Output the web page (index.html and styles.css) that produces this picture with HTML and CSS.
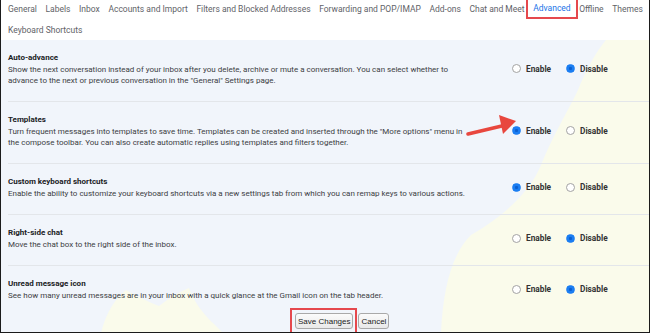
FILE: index.html
```html
<!DOCTYPE html>
<html>
<head>
<meta charset="utf-8">
<link rel="stylesheet" href="styles.css">
</head>
<body>
<div class="frame">
  <header class="tabs">
    <nav class="tabrow">
      <span class="tab">General</span>
      <span class="tab">Labels</span>
      <span class="tab">Inbox</span>
      <span class="tab">Accounts and Import</span>
      <span class="tab">Filters and Blocked Addresses</span>
      <span class="tab">Forwarding and POP/IMAP</span>
      <span class="tab">Add-ons</span>
      <span class="tab">Chat and Meet</span>
      <span class="tab active">Advanced</span>
      <span class="tab">Offline</span>
      <span class="tab">Themes</span>
    </nav>
    <nav class="tabrow second">
      <span class="tab">Keyboard Shortcuts</span>
    </nav>
  </header>
  <main class="content">
    <svg class="bgart" width="650" height="293" viewBox="0 0 650 293" aria-hidden="true">
      <path d="M605 0 L650 0 L650 293 L440 293 C442 250 450 215 470 195 C505 175 530 150 540 125 C552 95 565 75 577 50 C585 30 595 12 605 0 Z" fill="#fafbeb"/>
      <path d="M100 293 C105 272 115 258 125 250 C135 256 148 262 158 266 C168 258 178 252 188 248 C193 262 203 275 213 284 L222 293 Z" fill="#fafbeb"/>
    </svg>
    <section class="row">
      <div class="info">
        <div class="title">Auto-advance</div>
        <div class="desc">Show the next conversation instead of your inbox after you delete, archive or mute a conversation. You can select whether to<br>advance to the next or previous conversation in the "General" Settings page.</div>
      </div>
      <div class="opts">
        <label class="opt"><span class="radio"></span>Enable</label>
        <label class="opt"><span class="radio on"></span>Disable</label>
      </div>
    </section>
    <section class="row">
      <div class="info">
        <div class="title">Templates</div>
        <div class="desc">Turn frequent messages into templates to save time. Templates can be created and inserted through the "More options" menu in<br>the compose toolbar. You can also create automatic replies using templates and filters together.</div>
      </div>
      <div class="opts">
        <label class="opt"><span class="radio on"></span>Enable</label>
        <label class="opt"><span class="radio"></span>Disable</label>
      </div>
      <svg class="arrow" width="56" height="24" viewBox="0 0 56 24" aria-hidden="true">
        <path d="M2 20 L40 11" stroke="#e8473e" stroke-width="3.5" stroke-linecap="round"/>
        <path d="M50 7 L33 1 L37 20 Z" fill="#e8473e"/>
      </svg>
    </section>
    <section class="row">
      <div class="info">
        <div class="title">Custom keyboard shortcuts</div>
        <div class="desc">Enable the ability to customize your keyboard shortcuts via a new settings tab from which you can remap keys to various actions.</div>
      </div>
      <div class="opts">
        <label class="opt"><span class="radio on"></span>Enable</label>
        <label class="opt"><span class="radio"></span>Disable</label>
      </div>
    </section>
    <section class="row">
      <div class="info">
        <div class="title">Right-side chat</div>
        <div class="desc">Move the chat box to the right side of the inbox.</div>
      </div>
      <div class="opts">
        <label class="opt"><span class="radio"></span>Enable</label>
        <label class="opt"><span class="radio on"></span>Disable</label>
      </div>
    </section>
    <section class="row last">
      <div class="info">
        <div class="title">Unread message icon</div>
        <div class="desc">See how many unread messages are in your inbox with a quick glance at the Gmail icon on the tab header.</div>
      </div>
      <div class="opts">
        <label class="opt"><span class="radio"></span>Enable</label>
        <label class="opt"><span class="radio on"></span>Disable</label>
      </div>
    </section>
    <div class="actions">
      <div class="hl"><span class="btn">Save Changes</span></div>
      <span class="btn">Cancel</span>
    </div>
  </main>
</div>
</body>
</html>
```
FILE: styles.css
```css
* { box-sizing: border-box; }
html, body { margin: 0; padding: 0; background: #fff; }
.frame {
  width: 650px;
  height: 333px;
  border-left: 1px solid #1b1b1b;
  border-right: 1px solid #1b1b1b;
  border-bottom: 1px solid #1b1b1b;
  overflow: hidden;
  font-family: Roboto, "Liberation Sans", Arial, sans-serif;
  display: flex;
  flex-direction: column;
}
.tabs {
  background: #fff;
  height: 40px;
  flex: none;
  padding-left: 7px;
}
.tabrow {
  display: flex;
  gap: 8.6px;
  height: 17px;
  align-items: center;
}
.tabrow.second { margin-top: 4px; height: 17px; }
.tab {
  font-size: 8.5px;
  color: #5f6368;
  white-space: nowrap;
}
.tab.active {
  color: #1a73e8;
  outline: 2px solid #e5484d;
  padding: 0 5px;
  margin: 0 -5px;
  height: 17px;
  line-height: 17px;
}
.content {
  position: relative;
  flex: 1;
  background: #f1f5fb;
  padding-left: 7px;
}
.bgart { position: absolute; left: 0; top: 0; }
.row {
  position: relative;
  display: flex;
  align-items: center;
  padding: 11px 0 15px;
  border-bottom: 1px solid #e3e6ea;
}
.row.last { border-bottom: none; padding-bottom: 0; }
.info { width: 504px; }
.title {
  font-size: 8px;
  font-weight: 700;
  color: #202124;
  line-height: 13px;
}
.desc {
  font-size: 8px;
  color: #3c4043;
  line-height: 11px;
  white-space: nowrap;
}
.opts { display: flex; }
.opt {
  display: flex;
  align-items: center;
  width: 54px;
  font-size: 8.3px;
  font-weight: 700;
  color: #333;
}
.radio {
  width: 9px;
  height: 9px;
  border-radius: 50%;
  border: 1px solid #a3a3a3;
  background: #fff;
  margin-right: 5px;
  flex: none;
}
.radio.on {
  border-color: #1a7df2;
  background: radial-gradient(circle, #0b5fd0 0 1.3px, #1a7df2 1.8px);
}
.arrow { position: absolute; left: 458px; top: 12px; }
.actions {
  position: relative;
  display: flex;
  flex-wrap: nowrap;
  align-items: center;
  gap: 3px;
  margin-top: 12px;
  margin-left: 284px;
}
.hl {
  flex: none;
  display: flex;
  outline: 2px solid #e5484d;
  padding: 3px 2px 3px 3px;
  margin: -4px 0;
}
.btn {
  flex: none;
  display: inline-flex;
  align-items: center;
  white-space: nowrap;
  font-family: "Liberation Sans", Arial, sans-serif;
  font-size: 8px;
  height: 16px;
  padding: 0 2px;
  border: 1px solid #a9a9a9;
  border-radius: 3px;
  background: linear-gradient(#fbfbfb, #e9e9e9);
  color: #222;
}
```
